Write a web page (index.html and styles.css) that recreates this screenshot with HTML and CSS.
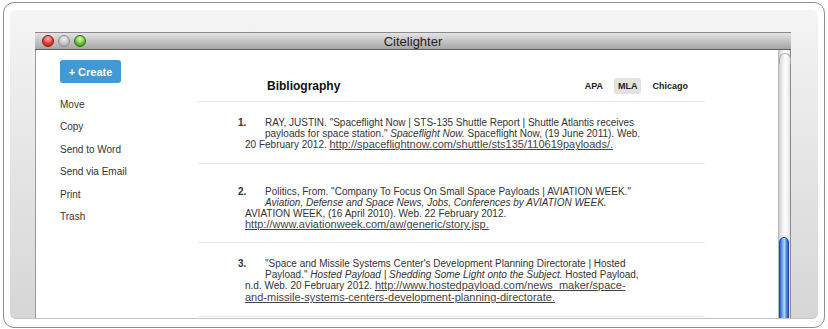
FILE: index.html
```html
<!DOCTYPE html>
<html>
<head>
    <title>Citelighter</title>
    <link rel="stylesheet" href="styles.css">
</head>
<body>
    <div class="frame">
        <div class="panel">
            <div class="window">
                <div class="titlebar">
                    <div class="lights">
                        <span class="light red"></span>
                        <span class="light gray"></span>
                        <span class="light green"></span>
                    </div>
                    <div class="title">Citelighter</div>
                    <div></div>
                </div>
                <div class="body">
                    <div class="sidebar">
                        <button class="create">+ Create</button>
                        <ul class="actions">
                            <li>Move</li>
                            <li>Copy</li>
                            <li>Send to Word</li>
                            <li>Send via Email</li>
                            <li>Print</li>
                            <li>Trash</li>
                        </ul>
                    </div>
                    <div class="main">
                        <div class="header">
                            <h1>Bibliography</h1>
                            <div class="styles">
                                <span class="style">APA</span>
                                <span class="style active">MLA</span>
                                <span class="style">Chicago</span>
                            </div>
                        </div>
                        <div class="entry">
                            <span class="num">1.</span>
                            RAY, JUSTIN. "Spaceflight Now | STS-135 Shuttle Report | Shuttle Atlantis receives<br>
                            payloads for space station." <i>Spaceflight Now.</i> Spaceflight Now, (19 June 2011). Web.<br>
                            20 February 2012. <a href="#">http://spaceflightnow.com/shuttle/sts135/110619payloads/.</a>
                        </div>
                        <div class="entry tall">
                            <span class="num">2.</span>
                            Politics, From. "Company To Focus On Small Space Payloads | AVIATION WEEK."<br>
                            <i>Aviation, Defense and Space News, Jobs, Conferences by AVIATION WEEK.</i><br>
                            AVIATION WEEK, (16 April 2010). Web. 22 February 2012.<br>
                            <a href="#">http://www.aviationweek.com/aw/generic/story.jsp.</a>
                        </div>
                        <div class="entry last">
                            <span class="num">3.</span>
                            "Space and Missile Systems Center's Development Planning Directorate | Hosted<br>
                            Payload." <i>Hosted Payload | Shedding Some Light onto the Subject.</i> Hosted Payload,<br>
                            n.d. Web. 20 February 2012. <a href="#">http://www.hostedpayload.com/news_maker/space-<br>and-missile-systems-centers-development-planning-directorate.</a>
                        </div>
                    </div>
                    <div class="spacer"></div>
                    <div class="scrollbar">
                        <div class="thumb"></div>
                    </div>
                </div>
            </div>
        </div>
    </div>
</body>
</html>
```

FILE: styles.css
```css
body {
    margin: 0;
    background: #fff;
    font-family: "Liberation Sans", Arial, sans-serif;
    color: #333;
}
.frame {
    margin: 2px 0 0 3px;
    width: 822px;
    height: 326px;
    box-sizing: border-box;
    border: 1px solid #8e8e8e;
    border-radius: 11px;
    padding: 7px 6px 8px 6px;
    background: #fff;
}
.panel {
    height: 100%;
    box-sizing: border-box;
    border-radius: 6px;
    overflow: hidden;
    padding: 22px 27px 0 25px;
    background: linear-gradient(#f4f4f4, #d6d6d6);
    border-bottom: 1px solid #c4c4c4;
}
.window {
    height: 100%;
    display: flex;
    flex-direction: column;
    background: #fff;
    border-left: 1px solid #9a9a9a;
    border-right: 1px solid #8a8a8a;
}
.titlebar {
    height: 18px;
    box-sizing: border-box;
    display: grid;
    grid-template-columns: 1fr auto 1fr;
    align-items: center;
    border-top: 1px solid #8a8a8a;
    border-bottom: 1px solid #5e5e5e;
    background: linear-gradient(#e4e4e4, #c4c4c4 50%, #a6a6a6);
    margin: 0 -1px;
}
.lights {
    display: flex;
    gap: 4px;
    padding-left: 7px;
}
.light {
    width: 12px;
    height: 12px;
    border-radius: 50%;
    box-sizing: border-box;
}
.red {
    background: radial-gradient(circle at 50% 30%, #ffc2bb, #e83a30 55%, #a8140e);
    border: 1px solid #8c1a16;
}
.gray {
    background: radial-gradient(circle at 50% 30%, #f2f2f2, #c4c4c4 55%, #9e9e9e);
    border: 1px solid #8e8e8e;
}
.green {
    background: radial-gradient(circle at 50% 30%, #dcffb8, #6cc23a 55%, #2f7d12);
    border: 1px solid #2f6d14;
}
.title {
    font-size: 13px;
    color: #1e1e1e;
}
.body {
    flex: 1;
    display: flex;
    min-height: 0;
}
.sidebar {
    width: 162px;
    box-sizing: border-box;
    padding: 10px 0 0 24px;
}
.create {
    height: 23px;
    width: 61px;
    border: none;
    border-radius: 3px;
    background: #4399d3;
    color: #fff;
    font-family: "Liberation Sans", Arial, sans-serif;
    font-weight: bold;
    font-size: 11px;
    padding: 0;
}
.actions {
    list-style: none;
    margin: 11px 0 0;
    padding: 0;
}
.actions li {
    font-size: 10px;
    line-height: 22.4px;
    color: #333;
}
.main {
    width: 507px;
}
.header {
    display: flex;
    align-items: center;
    justify-content: space-between;
    height: 16px;
    padding: 28px 13px 7px 69px;
    border-bottom: 1px solid #e6e6e6;
}
.header h1 {
    margin: 0;
    font-size: 12px;
    line-height: 16px;
    color: #111;
}
.styles {
    display: flex;
    gap: 7px;
}
.style {
    font-size: 9px;
    font-weight: bold;
    line-height: 16px;
    padding: 0 4px;
    border-radius: 3px;
    color: #222;
}
.style.active {
    background: #e2e2e2;
}
.entry {
    font-size: 10px;
    line-height: 10.7px;
    color: #333;
    white-space: nowrap;
    padding: 16px 0 12px 47px;
    border-bottom: 1px solid #e8e8e8;
}
.entry.tall {
    padding-top: 23px;
    padding-bottom: 11px;
}
.entry.last {
    padding-top: 16px;
}
.num {
    float: left;
    width: 27px;
    height: 21.4px;
    margin-left: -7px;
    font-weight: bold;
}
.entry a {
    color: #444;
    font-size: 11px;
    text-decoration: underline;
}
.spacer {
    flex: 1;
}
.scrollbar {
    width: 12px;
    box-sizing: border-box;
    border-left: 1px solid #b8b8b8;
    background: linear-gradient(to right, #cfcfcf, #f2f2f2 35%, #fff 60%, #e2e2e2);
    padding-top: 187px;
    position: relative;
}
.scrollbar::before {
    content: "";
    position: absolute;
    top: 3px;
    left: 0;
    width: 10px;
    height: 10px;
    border: 1px solid #aaa;
    border-bottom: none;
    border-radius: 6px 6px 0 0;
    background: linear-gradient(to right, #dcdcdc, #fff 60%, #e6e6e6);
}
.thumb {
    width: 10px;
    height: 100px;
    box-sizing: border-box;
    border: 1px solid #1d4ea6;
    border-radius: 6px;
    background: linear-gradient(to right, #2e62cf, #6fa6f2 30%, #b4d8ff 55%, #5c94ea 75%, #2c5fcc);
}
```
